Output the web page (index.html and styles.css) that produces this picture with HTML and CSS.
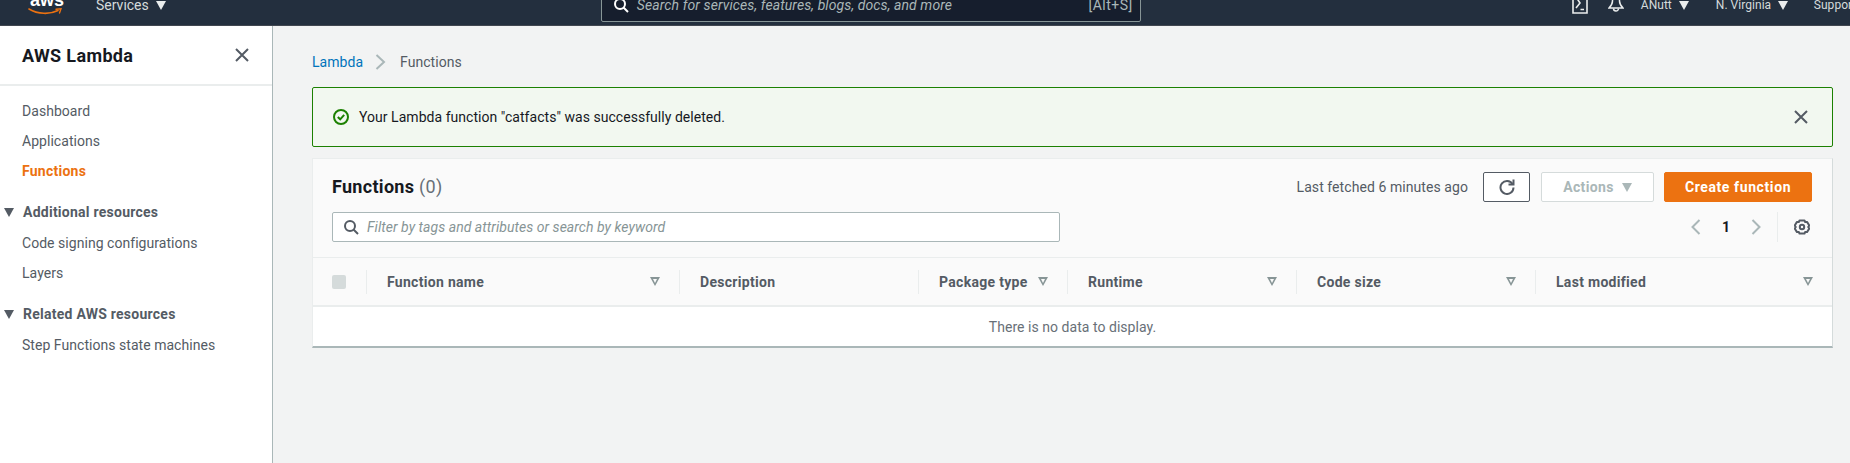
FILE: index.html
```html
<!DOCTYPE html>
<html lang="en">
<head>
<meta charset="utf-8">
<title>Functions - Lambda</title>
<link rel="stylesheet" href="styles.css">
</head>
<body>
<header class="topbar">
  <div class="topbar-inner">
    <div class="logo">
      <span class="logo-text">aws</span>
      <svg class="logo-smile" width="34" height="7" viewBox="0 0 34 7"><path d="M1 1C10 6.500 22 6.500 30 2.500" fill="none" stroke="#ec7211" stroke-width="1.600" stroke-linecap="round"/><path d="M28 1.200L33 0.800L31.500 5" fill="none" stroke="#ec7211" stroke-width="1.400" stroke-linecap="round"/></svg>
    </div>
    <div class="nav-item services">Services <span class="tri"></span></div>
    <div class="global-search">
      <svg width="16" height="16" viewBox="0 0 16 16"><circle cx="7" cy="7" r="5" fill="none" stroke="#fff" stroke-width="2"/><path d="M10.500 10.500L15 15" stroke="#fff" stroke-width="2"/></svg>
      <span class="global-search-text">Search for services, features, blogs, docs, and more</span>
      <span class="global-search-key">[Alt+S]</span>
    </div>
    <div class="top-right">
      <svg class="top-icon" width="16" height="18" viewBox="0 0 16 18"><path d="M1 -2V17H15V-2" fill="none" stroke="#eaeded" stroke-width="1.600"/><path d="M4 1L8 7L4 12M8.500 13.500H12" fill="none" stroke="#eaeded" stroke-width="1.600"/></svg>
      <svg class="top-icon bell" width="16" height="18" viewBox="0 0 16 18"><path d="M8 -2C5 -2 4.500 2 4.500 5C4.500 8 3 10 1 12H15C13 10 11.500 8 11.500 5C11.500 2 11 -2 8 -2Z" fill="none" stroke="#eaeded" stroke-width="1.500"/><path d="M5.500 12.500A2.500 2.500 0 0 0 10.500 12.500" fill="none" stroke="#eaeded" stroke-width="1.500"/></svg>
      <div class="nav-item user">ANutt <span class="tri small"></span></div>
      <div class="nav-item region">N. Virginia <span class="tri small"></span></div>
      <div class="nav-item support">Support</div>
    </div>
  </div>
</header>

<div class="layout">
  <aside class="sidebar">
    <div class="side-head">
      <h2 class="side-title">AWS Lambda</h2>
      <svg width="16" height="16" viewBox="0 0 16 16"><path d="M2 2L14 14M14 2L2 14" stroke="#545b64" stroke-width="2"/></svg>
    </div>
    <nav class="side-nav">
      <a class="side-link">Dashboard</a>
      <a class="side-link">Applications</a>
      <a class="side-link active">Functions</a>
      <div class="side-section"><span class="tri side-tri"></span>Additional resources</div>
      <a class="side-link">Code signing configurations</a>
      <a class="side-link">Layers</a>
      <div class="side-section"><span class="tri side-tri"></span>Related AWS resources</div>
      <a class="side-link">Step Functions state machines</a>
    </nav>
  </aside>

  <main class="main">
    <div class="breadcrumb">
      <a class="crumb-link">Lambda</a>
      <svg width="11" height="16" viewBox="0 0 11 16"><path d="M1.500 1L9 8L1.500 15" fill="none" stroke="#aab7b8" stroke-width="2"/></svg>
      <span class="crumb-current">Functions</span>
    </div>

    <div class="alert">
      <svg class="alert-icon" width="16" height="16" viewBox="0 0 16 16"><circle cx="8" cy="8" r="7" fill="none" stroke="#1d8102" stroke-width="2"/><path d="M4.800 8L7.200 10.300L11.200 5.800" fill="none" stroke="#1d8102" stroke-width="2"/></svg>
      <span class="alert-text">Your Lambda function "catfacts" was successfully deleted.</span>
      <svg class="alert-close" width="16" height="16" viewBox="0 0 16 16"><path d="M2 2L14 14M14 2L2 14" stroke="#545b64" stroke-width="2"/></svg>
    </div>

    <section class="card">
      <div class="card-head">
        <div class="head-row">
          <h1 class="card-title">Functions <span class="count">(0)</span></h1>
          <div class="actions">
            <span class="fetched">Last fetched 6 minutes ago</span>
            <button class="btn btn-refresh"><svg width="16" height="16" viewBox="0 0 16 16"><path d="M13.500 5A6.500 6.500 0 1 0 14.500 8.500" fill="none" stroke="#545b64" stroke-width="2"/><path d="M9.500 5.500H14.500V0.500" fill="none" stroke="#545b64" stroke-width="2"/></svg></button>
            <button class="btn btn-disabled">Actions <span class="tri grey"></span></button>
            <button class="btn btn-primary">Create function</button>
          </div>
        </div>
        <div class="head-row filter-row">
          <div class="filter">
            <svg width="16" height="16" viewBox="0 0 16 16"><circle cx="7" cy="7" r="5" fill="none" stroke="#545b64" stroke-width="2"/><path d="M10.500 10.500L15 15" stroke="#545b64" stroke-width="2"/></svg>
            <span class="filter-text">Filter by tags and attributes or search by keyword</span>
          </div>
          <div class="pager">
            <span class="page-btn"><svg width="10" height="16" viewBox="0 0 10 16"><path d="M8.500 1L1.500 8L8.500 15" fill="none" stroke="#aab7b8" stroke-width="2"/></svg></span>
            <span class="page-btn page-num">1</span>
            <span class="page-btn"><svg width="10" height="16" viewBox="0 0 10 16"><path d="M1.500 1L8.500 8L1.500 15" fill="none" stroke="#aab7b8" stroke-width="2"/></svg></span>
            <span class="page-settings"><svg width="16" height="16" viewBox="0 0 16 16"><circle cx="8" cy="8" r="2.200" fill="none" stroke="#545b64" stroke-width="2"/><path d="M5.500 1.500H10.500L11.200 3.100L13 2.900L15.300 6.500L14.200 8L15.300 9.500L13 13.100L11.200 12.900L10.500 14.500H5.500L4.800 12.900L3 13.100L0.700 9.500L1.800 8L0.700 6.500L3 2.900L4.800 3.100Z" fill="none" stroke="#545b64" stroke-width="2" stroke-linejoin="round"/></svg></span>
          </div>
        </div>
      </div>
      <div class="thead">
        <div class="th-check"><span class="checkbox"></span></div>
        <div class="th"><span>Function name</span><span class="sort"></span></div>
        <div class="th"><span>Description</span></div>
        <div class="th"><span>Package type</span><span class="sort"></span></div>
        <div class="th"><span>Runtime</span><span class="sort"></span></div>
        <div class="th"><span>Code size</span><span class="sort"></span></div>
        <div class="th"><span>Last modified</span><span class="sort"></span></div>
      </div>
      <div class="empty">There is no data to display.</div>
    </section>
  </main>
</div>
</body>
</html>
```

FILE: styles.css
```css
* { box-sizing: border-box; }
html, body { margin: 0; height: 100%; overflow: hidden; }
body {
  font-family: Roboto, "Liberation Sans", sans-serif;
  font-size: 14px;
  letter-spacing: 0.04px;
  color: #16191f;
  background: #f2f3f3;
  display: flex;
  flex-direction: column;
}
h1, h2 { margin: 0; }

.tri {
  display: inline-block;
  width: 0;
  height: 0;
  border-left: 5px solid transparent;
  border-right: 5px solid transparent;
  border-top: 9px solid #eaeded;
}

.topbar {
  height: 26px;
  flex: none;
  background: #232f3e;
  border-bottom: 1px solid #414750;
  overflow: hidden;
}
.topbar-inner {
  height: 40px;
  margin-top: -15px;
  display: flex;
  align-items: center;
  color: #eaeded;
}
.logo {
  width: 34px;
  margin-left: 28px;
  height: 40px;
  position: relative;
  flex: none;
}
.logo-text {
  position: absolute;
  left: 2px;
  top: 1px;
  font-family: "Liberation Sans", sans-serif;
  font-weight: 700;
  font-size: 18px;
  line-height: 28px;
  color: #fff;
}
.logo-smile { position: absolute; left: 0; top: 23px; }
.nav-item { font-size: 14px; white-space: nowrap; display: flex; align-items: center; gap: 7px; }
.services { margin-left: 34px; width: 70px; color: #d5dbdb; letter-spacing: 0; }
.global-search {
  width: 540px;
  height: 34px;
  margin-left: 435px;
  background: #161e2d;
  border: 1px solid #879596;
  border-radius: 2px;
  display: flex;
  align-items: center;
  padding: 0 7px 0 11px;
  flex: none;
}
.global-search-text { margin-left: 8px; flex: 1; font-style: italic; color: #aab7b8; font-size: 14px; letter-spacing: 0.1px; }
.global-search-key { color: #aab7b8; font-size: 14px; letter-spacing: 0.5px; }
.top-right { display: flex; align-items: center; margin-left: 431px; flex: none; }
.top-icon { flex: none; }
.bell { margin-left: 20px; }
.user { margin-left: 17px; font-size: 12px; width: 75px; color: #d5dbdb; }
.region { font-size: 12px; width: 98px; color: #d5dbdb; }
.support { font-size: 12px; color: #d5dbdb; }

.layout { flex: 1; display: flex; min-height: 0; }

.sidebar {
  width: 273px;
  flex: none;
  background: #fff;
  border-right: 1px solid #aab7b8;
}
.side-head {
  height: 60px;
  border-bottom: 2px solid #eaeded;
  padding: 0 22px;
  display: flex;
  align-items: center;
  justify-content: space-between;
}
.side-title { font-size: 18px; font-weight: 700; line-height: 22px; letter-spacing: 0.35px; padding-top: 2px; }
.side-nav { padding-top: 10px; display: flex; flex-direction: column; }
.side-link { line-height: 30px; padding-left: 22px; color: #545b64; }
.side-link.active { color: #ec7211; font-weight: 700; letter-spacing: 0.25px; }
.side-section {
  margin-top: 11px;
  margin-bottom: 1px;
  line-height: 30px;
  font-weight: 700;
  letter-spacing: 0.25px;
  color: #545b64;
  padding-left: 4px;
  display: flex;
  align-items: center;
}
.side-tri { border-top-color: #545b64; margin-right: 9px; }

.main { flex: 1; padding: 26px 17px 0 39px; min-width: 0; }
.breadcrumb { height: 20px; display: flex; align-items: center; line-height: 20px; }
.crumb-link { color: #0073bb; }
.breadcrumb svg { margin: 0 14px 0 12px; }
.crumb-current { color: #545b64; }

.alert {
  margin-top: 15px;
  height: 60px;
  background: #f2f8f0;
  border: 1px solid #1d8102;
  border-radius: 2px;
  display: flex;
  align-items: center;
  padding: 0 23px 0 20px;
}
.alert-text { margin-left: 10px; flex: 1; }

.card {
  margin-top: 11px;
  background: #fff;
  border: 1px solid #eaeded;
  border-bottom: 2px solid #aab7b8;
  border-right-color: #d5dbdb;
}
.card-head {
  background: #fafafa;
  padding: 13px 20px 15px 19px;
  border-bottom: 1px solid #eaeded;
}
.head-row { display: flex; align-items: center; justify-content: space-between; height: 30px; }
.filter-row { margin-top: 10px; }
.card-title { font-size: 18px; font-weight: 700; line-height: 30px; letter-spacing: 0.3px; }
.count { font-weight: 400; color: #687078; }
.actions { display: flex; align-items: center; }
.fetched { color: #545b64; margin-right: 15px; letter-spacing: 0.07px; }
.btn {
  height: 30px;
  font: 700 14px Roboto, "Liberation Sans", sans-serif;
  border-radius: 2px;
  padding: 0;
  display: flex;
  align-items: center;
  justify-content: center;
}
.btn-refresh { width: 47px; background: #fff; border: 1px solid #545b64; }
.btn-disabled { width: 113px; margin-left: 11px; background: #fff; border: 1px solid #d5dbdb; color: #aab7b8; gap: 8px; letter-spacing: 0.35px; }
.tri.grey { border-top-color: #aab7b8; }
.btn-primary { width: 148px; margin-left: 10px; background: #ec7211; border: 1px solid #ec7211; color: #fff; letter-spacing: 0.6px; }

.filter {
  width: 728px;
  height: 30px;
  background: #fff;
  border: 1px solid #aab7b8;
  border-radius: 2px;
  display: flex;
  align-items: center;
  padding: 0 10px;
}
.filter-text { margin-left: 8px; font-style: italic; color: #879596; }
.pager { display: flex; align-items: center; height: 30px; }
.page-btn { width: 30px; display: flex; align-items: center; justify-content: center; }
.page-num { font-weight: 700; }
.page-settings {
  margin-left: 6px;
  height: 30px;
  width: 35px;
  padding-left: 16px;
  border-left: 1px solid #eaeded;
  display: flex;
  align-items: center;
}

.thead {
  display: grid;
  grid-template-columns: 53px 313px 239px 149px 229px 239px 1fr;
  height: 49px;
  align-items: center;
  background: #fafafa;
  border-bottom: 2px solid #eaeded;
}
.th-check { padding-left: 19px; display: flex; }
.checkbox { width: 14px; height: 14px; background: #d5dbdb; border-radius: 2px; }
.th {
  height: 24px;
  border-left: 1px solid #eaeded;
  padding: 0 19px 0 20px;
  display: flex;
  align-items: center;
  justify-content: space-between;
  font-weight: 700;
  letter-spacing: 0.3px;
  color: #545b64;
}
.sort {
  width: 0;
  height: 0;
  border-left: 5px solid transparent;
  border-right: 5px solid transparent;
  border-top: 9px solid #879596;
  position: relative;
}
.sort::after {
  content: "";
  position: absolute;
  left: -2px;
  top: -7px;
  border-left: 2px solid transparent;
  border-right: 2px solid transparent;
  border-top: 4px solid #fafafa;
}
.empty {
  height: 39px;
  line-height: 41px;
  text-align: center;
  color: #687078;
}
```
